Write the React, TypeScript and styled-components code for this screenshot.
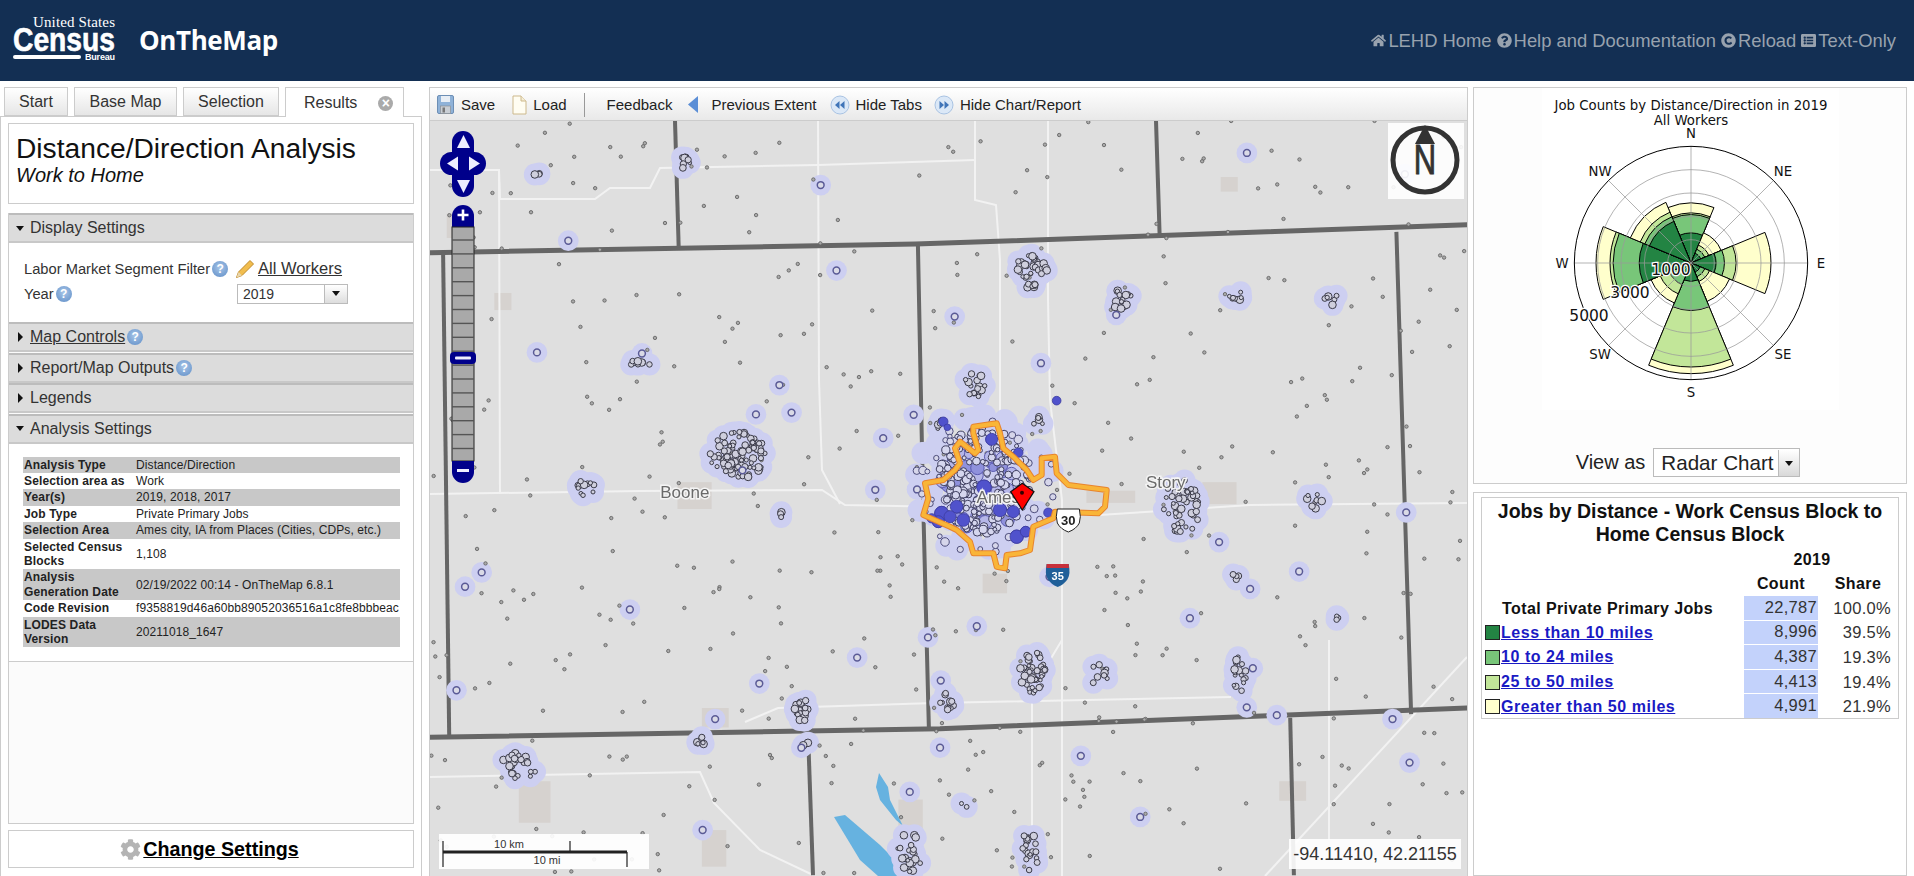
import React from "react";
import styled, { createGlobalStyle } from "styled-components";
import { FaHome, FaQuestionCircle, FaCopyright, FaListAlt, FaCog } from "react-icons/fa";

const Global = createGlobalStyle`
  html, body { margin: 0; padding: 0; background: #fff; overflow: hidden; }
  body { font-family: "Liberation Sans", Arial, sans-serif; color: #222; }
  * { box-sizing: border-box; }
`;

const Page = styled.div`width: 1914px; height: 876px; display: flex; flex-direction: column; overflow: hidden;`;
const Header = styled.header`height: 81px; background: #132f53; display: flex; align-items: center; padding: 0 18px 0 12px;`;
const AppName = styled.div`font: 700 26px "Open Sans", sans-serif; color: #fff; margin-left: 17px; letter-spacing: -0.4px; margin-top: -2px;`;
const HeaderLinks = styled.nav`margin-left: auto; display: flex; gap: 5px; color: #98a2ae; font-size: 18.4px;`;
const HeaderLink = styled.a`display: flex; align-items: center; gap: 2px; svg { width: 15px; height: 15px; }`;

const Main = styled.main`flex: 1; display: flex; padding-top: 6px; min-height: 0;`;
const Left = styled.section`width: 422px; display: flex; flex-direction: column;`;
const Tabs = styled.div`height: 29px; display: flex; gap: 6px; padding-left: 4px; position: relative; z-index: 1;`;
const Tab = styled.div<{ $w: number; $active?: boolean }>`
  width: ${p => p.$w}px; height: ${p => (p.$active ? 30 : 29)}px; border: 1px solid #ccc; border-bottom: ${p => (p.$active ? "none" : "1px solid #ccc")};
  background: ${p => (p.$active ? "#fff" : "linear-gradient(#fff, #e6e6e6)")};
  font-size: 16px; color: #333; display: flex; align-items: center; justify-content: ${p => (p.$active ? "flex-start" : "center")};
  padding-left: ${p => (p.$active ? 18 : 0)}px;
`;
const CloseDot = styled.span`
  width: 15px; height: 15px; border-radius: 50%; background: #aaa; color: #fff; font-size: 14px; font-weight: 700; line-height: 15px; text-align: center; margin-left: 21px; margin-top: 2px;
`;
const LeftBody = styled.div`flex: 1; border: 1px solid #ccc; border-bottom: none; padding: 6px 7px 8px; display: flex; flex-direction: column; min-height: 0;`;
const TitleBox = styled.div`height: 81px; border: 1px solid #ccc; padding: 8px 7px;`;
const Title = styled.h1`margin: 0; font-size: 28.2px; font-weight: 400; color: #111; line-height: 32px; white-space: nowrap;`;
const Subtitle = styled.div`font-size: 20px; font-style: italic; color: #111; line-height: 23px;`;
const Accordion = styled.div`margin-top: 9px; flex: 1; border: 1px solid #ccc; border-top: none; background: #fbfbfb;`;
const SectionHead = styled.div`
  height: 30px; background: #dcdcdc; border-top: 2px solid #bcbcbc; border-bottom: 2px solid #c8c8c8; display: flex; align-items: center; font-size: 16px; color: #333; padding-left: 7px; margin-bottom: 0.5px;
`;
const Caret = styled.span<{ $open?: boolean }>`
  width: 0; height: 0; margin-right: 6px;
  ${p => p.$open
    ? "border-left: 4.5px solid transparent; border-right: 4.5px solid transparent; border-top: 5px solid #111; margin-left: 0;"
    : "border-top: 5px solid transparent; border-bottom: 5px solid transparent; border-left: 5px solid #111; margin-left: 2px; margin-right: 7px;"}
`;
const Underlined = styled.span`text-decoration: underline;`;
const Help = styled.span`
  display: inline-flex; align-items: center; justify-content: center; width: 16px; height: 16px; border-radius: 50%; margin-left: 2px;
  background: radial-gradient(circle at 50% 40%, #a9c6e8, #5d8cc6); color: #fff; font-size: 12px; font-weight: 700; flex: none;
`;
const SettingsBody = styled.div`height: 79px; background: #fff; margin-top: -0.5px; padding: 13px 15px 0; display: grid; grid-template-columns: 211px 1fr; grid-auto-rows: 25px; align-items: center; font-size: 14.7px; color: #333;`;
const LabelCell = styled.div`display: flex; align-items: center; white-space: nowrap;`;
const ValueCell = styled.div`display: flex; align-items: center; gap: 3px; font-size: 16.5px;`;
const SelectBox = styled.div`width: 111px; height: 20px; border: 1px solid #bbb; display: flex; align-items: center; font-size: 14px; padding-left: 5px; margin-left: 2px;`;
const SelectArrow = styled.span`
  margin-left: auto; width: 23px; height: 100%; border-left: 1px solid #bbb; background: linear-gradient(#fff, #ddd); display: flex; align-items: center; justify-content: center;
  &::after { content: ""; border-left: 4.5px solid transparent; border-right: 4.5px solid transparent; border-top: 5px solid #111; }
`;
const AnalysisBody = styled.div`height: 218px; background: #fff; border-bottom: 1px solid #ccc; margin-top: -0.5px; padding: 13px 14px 0;`;
const InfoTable = styled.table`width: 377px; border-collapse: collapse; font-size: 12px; line-height: 14.4px; color: #222; table-layout: fixed;`;
const InfoRow = styled.tr<{ $dark?: boolean }>`background: ${p => (p.$dark ? "#c8c8c8" : "#fff")};`;
const InfoKey = styled.th`width: 113px; text-align: left; padding: 1px 1px; font-weight: 700; vertical-align: middle; letter-spacing: 0.15px;`;
const InfoVal = styled.td`padding: 1px 0 1px 0; vertical-align: middle; white-space: nowrap; letter-spacing: 0.1px;`;
const ChangeBox = styled.div`height: 38px; margin-top: 6px; border: 1px solid #ccc; display: flex; align-items: center; justify-content: center; font-size: 19.7px; font-weight: 700; color: #000; gap: 2px; flex: none; padding-top: 1px;
  svg { width: 21px; height: 21px; color: #b4b4b4; margin-left: -3px; }`;

const Center = styled.section`width: 1039px; margin-left: 7px; display: flex; flex-direction: column; border-left: 1px solid #ccc; border-right: 1px solid #ccc;`;
const Toolbar = styled.div`height: 34px; flex: none; border-top: 1px solid #ccc; border-bottom: 1px solid #ccc; background: linear-gradient(#fff, #e9e9e9); display: flex; align-items: center; font-size: 15px; color: #222; padding: 1px 0 0 7px;`;
const ToolItem = styled.span<{ $ml: number }>`display: flex; align-items: center; gap: 6px; margin-left: ${p => p.$ml}px; white-space: nowrap;`;
const ToolSep = styled.span`width: 1px; height: 24px; background: #999; margin-left: 17px;`;
const MapWrap = styled.div`flex: 1; position: relative; overflow: hidden; background: #dfdfdf;`;
const MapSvg = styled.svg`display: block; width: 1037px; height: 755px; filter: blur(0.35px);`;
const PanZoom = styled.svg`position: absolute; left: 10px; top: 9px;`;
const North = styled.svg`position: absolute; left: 958px; top: 2px; background: rgba(255,255,255,0.9);`;
const Scale = styled.svg`position: absolute; left: 9px; top: 713px; background: rgba(255,255,255,0.92);`;
const Coords = styled.div`position: absolute; left: 859px; top: 718px; width: 172px; height: 30px; background: rgba(255,255,255,0.9); font-size: 18px; color: #333; display: flex; align-items: center; justify-content: center; white-space: nowrap;`;

const Right = styled.section`width: 434px; margin-left: 5px; display: flex; flex-direction: column;`;
const ChartBox = styled.div`height: 397px; border: 1px solid #ccc; background: #fdfdfd; display: flex; flex-direction: column; align-items: center; flex: none;`;
const ChartSvg = styled.svg`display: block; background: #fff; flex: none;`;
const ViewRow = styled.div`display: flex; align-items: center; gap: 8px; margin-top: 38px; margin-left: -4px; font-size: 20px; color: #222;`;
const ViewSelect = styled.div`width: 147px; height: 29px; border: 1px solid #bbb; background: #fff; display: flex; align-items: center; padding: 1px 0 0 7px; font-size: 20.6px; white-space: nowrap;`;
const ViewArrow = styled.span`
  margin-left: auto; width: 21px; height: 100%; border-left: 1px solid #bbb; background: linear-gradient(#fff, #d8d8d8); display: flex; align-items: center; justify-content: center; flex: none;
  &::after { content: ""; border-left: 4.5px solid transparent; border-right: 4.5px solid transparent; border-top: 5px solid #111; }
`;
const ReportBox = styled.div`flex: 1; margin-top: 8px; border: 1px solid #ccc; padding: 4px 7px;`;
const ReportInner = styled.div`border: 1px solid #ccc; height: 222px; overflow: hidden;`;
const ReportTitle = styled.div`font-size: 19.5px; font-weight: 700; color: #111; text-align: center; line-height: 23px; padding-top: 2px; white-space: nowrap;`;
const ReportTable = styled.table`width: 416px; margin-top: 2px; border-collapse: separate; border-spacing: 0; table-layout: fixed; font-size: 16.5px; color: #333;`;
const Th = styled.th<{ $align?: string }>`height: 24px; padding: 0; font-weight: 700; color: #111; text-align: ${p => p.$align || "center"}; font-size: 16px; letter-spacing: 0.4px;`;
const RowHead = styled.td`height: 24.6px; padding: 0 0 0 3px; white-space: nowrap;`;
const RowLabel = styled.div`display: flex; align-items: center; gap: 2px;`;
const Swatch = styled.span<{ $c: string }>`width: 15px; height: 15px; background: ${p => p.$c}; border: 1px solid #222; flex: none;`;
const LegendLink = styled.a`font-weight: 700; color: #1a1ac4; text-decoration: underline; font-size: 16px; letter-spacing: 0.55px; margin-left: -1px;`;
const TotalLabel = styled.span`font-weight: 700; color: #111; font-size: 16px; letter-spacing: 0.4px; margin-left: 17px;`;
const Count = styled.td`height: 24.6px; padding: 0 1px 1px 0; text-align: right; background: #c3d2fb; border-bottom: 1px solid #fff; letter-spacing: 0.3px;`;
const Share = styled.td`height: 24.6px; padding: 0 7px 0 0; text-align: right; letter-spacing: 0.3px;`;
const LogoSvg = styled.svg`flex: none; overflow: visible;`;

/* ---------- map data (coordinates: full-page pixels, shifted by OX/OY) ---------- */
const K = 1914 / 1568;
const OX = 430, OY = 121;
const sx = (x: number) => x * K - OX;
const sy = (y: number) => y * K - OY;
const pts = (a: number[][]) => a.map(([x, y]) => `${sx(x).toFixed(1)},${sy(y).toFixed(1)}`).join(" ");
const fpts = (a: number[][]) => a.map(([x, y]) => `${x - OX},${y - OY}`).join(" ");

function rng(seed: number) {
  return () => {
    seed |= 0; seed = (seed + 0x6d2b79f5) | 0;
    let t = Math.imul(seed ^ (seed >>> 15), 1 | seed);
    t = (t + Math.imul(t ^ (t >>> 7), 61 | t)) ^ t;
    return ((t ^ (t >>> 14)) >>> 0) / 4294967296;
  };
}
const R = rng(42);

const county = [
  [[352, 207], [750, 200], [1203, 184]],
  [[553, 99], [556, 203]],
  [[947, 99], [950, 192]],
  [[363, 207], [368, 603]],
  [[752, 200], [756, 400], [761, 597]],
  [[1144, 190], [1156, 585]],
  [[352, 604], [770, 597], [1203, 580]],
  [[662, 602], [666, 717]],
  [[1057, 588], [1060, 717]],
];
const roads = [
  [[430, 170], [499, 170], [500, 199], [595, 199], [610, 188], [650, 188], [660, 168], [818, 165], [975, 160]],
  [[499, 170], [500, 494]],
  [[818, 121], [819, 380], [822, 470], [840, 504]],
  [[975, 121], [975, 200], [996, 205], [1000, 260], [1000, 480]],
  [[1048, 121], [1048, 300], [1050, 400], [1062, 500], [1062, 640], [1032, 690], [1032, 876]],
  [[430, 494], [640, 491], [822, 490], [845, 505], [1000, 508], [1100, 515], [1250, 505], [1468, 503]],
  [[430, 777], [700, 772], [714, 803], [760, 850], [815, 876]],
  [[745, 722], [778, 708], [934, 703], [1231, 697]],
  [[1467, 657], [1265, 876]],
  [[1062, 640], [1062, 876]],
  [[1329, 640], [1329, 840]],
];
const towns = [[575, 580, 22, 16], [405, 240, 14, 14], [1000, 145, 14, 12], [555, 395, 28, 22], [985, 395, 28, 18], [890, 402, 40, 10], [425, 640, 26, 34], [575, 680, 20, 30], [736, 655, 20, 30], [1048, 640, 22, 16], [805, 470, 20, 16], [366, 175, 12, 20]];

type C = { x: number; y: number; r: number; f: string; s: string; w: number };
const halos: { x: number; y: number; r: number }[] = [];
const circles: C[] = [];
const dots: { x: number; y: number }[] = [];

for (let i = 0; i < 470; i++) dots.push({ x: 352 + R() * 851, y: 99 + R() * 618 });

const clusters = [
  [845, 222, 14, 14, 42], [918, 245, 9, 8, 14], [1013, 242, 6, 6, 8], [1090, 245, 6, 6, 6],
  [604, 372, 23, 21, 95], [480, 400, 7, 8, 14], [524, 298, 13, 3, 8], [660, 582, 11, 9, 18],
  [775, 577, 6, 10, 12], [845, 550, 11, 18, 46], [900, 552, 8, 10, 10], [1015, 552, 6, 15, 18],
  [1077, 410, 7, 7, 8], [968, 415, 15, 23, 52], [799, 317, 10, 12, 16], [772, 348, 7, 7, 6],
  [852, 345, 6, 6, 5], [425, 628, 15, 12, 24], [574, 607, 4, 7, 6], [745, 698, 11, 16, 22],
  [843, 698, 9, 15, 20], [440, 143, 3, 3, 3], [562, 133, 5, 7, 7], [1012, 472, 4, 4, 4],
  [1095, 505, 4, 4, 3], [640, 420, 4, 4, 3], [660, 610, 3, 3, 2], [790, 660, 3, 3, 2],
];
for (const [x, y, rx, ry, n] of clusters) {
  for (let i = 0; i < n; i++) {
    const a = R() * Math.PI * 2, d = Math.sqrt(R());
    const b = R() > 0.78;
    const cx = x + Math.cos(a) * d * rx, cy = y + Math.sin(a) * d * ry;
    halos.push({ x: cx, y: cy, r: 9 });
    circles.push({ x: cx, y: cy, r: b ? 3.8 : 1.8 + R() * 1.6, f: "#cfcfdd", s: "#3a3a48", w: 1 });
  }
}
for (let i = 0; i < 46; i++) {
  const x = 370 + R() * 820, y = 110 + R() * 590;
  halos.push({ x, y, r: 8.5 });
  circles.push({ x, y, r: 3.4, f: "#dadae6", s: "#5a5a96", w: 1.5 });
}
// Ames centre: a dense mass of circles with scattered halos around it
for (let i = 0; i < 120; i++) {
  const a = R() * Math.PI * 2, d = Math.sqrt(R());
  halos.push({ x: 806 + Math.cos(a) * d * 58, y: 398 + Math.sin(a) * d * 58, r: 9 });
}
for (let i = 0; i < 50; i++) {
  const a = R() * Math.PI * 2, d = 0.55 + R() * 0.45;
  circles.push({ x: 806 + Math.cos(a) * d * 60, y: 398 + Math.sin(a) * d * 56, r: 2 + R() * 2.4, f: "#d6d6ea", s: "#4e4e7c", w: 1 });
}
for (let i = 0; i < 45; i++) {
  const a = R() * Math.PI * 2, d = Math.sqrt(R());
  circles.push({ x: 806 + Math.cos(a) * d * 36, y: 400 + Math.sin(a) * d * 38, r: 4 + R() * 3, f: i % 2 ? "#8f91dc" : "#b5b6e8", s: "#5a5ab0", w: 1 });
}
for (let i = 0; i < 230; i++) {
  const a = R() * Math.PI * 2, d = Math.sqrt(R());
  circles.push({ x: 806 + Math.cos(a) * d * 38, y: 393 + Math.sin(a) * d * 44, r: 1.8 + R() * 2.6, f: "#d5d6ee", s: "#3f3f60", w: 1 });
}
const big: number[][] = [[245, 370, 21], [310, 390, 19], [235, 395, 18], [290, 350, 19], [460, 365, 18], [470, 440, 20], [497, 425, 16], [395, 148, 18], [372, 292, 22], [420, 360, 20], [250, 95, 14], [475, 188, 14], [590, 32, 13], [262, 112, 10], [565, 368, 14], [270, 380, 18], [215, 385, 14]];
const ames = [[340, 110], [410, 100], [420, 130], [430, 175], [460, 200], [500, 240], [520, 270], [545, 255], [545, 205], [585, 200], [590, 250], [625, 285], [740, 300], [735, 350], [715, 370], [585, 365], [580, 385], [520, 410], [510, 480], [480, 490], [440, 495], [435, 535], [410, 530], [400, 490], [340, 490], [330, 455], [290, 420], [270, 410], [190, 375], [205, 325], [195, 280], [250, 270], [285, 240], [300, 220], [285, 175], [300, 155], [345, 190], [355, 180], [340, 130]];
const zx = (x: number) => 860 + x / 3 - OX;
const zy = (y: number) => 390 + y / 3 - OY;
const amesPts = ames.map(([x, y]) => `${zx(x).toFixed(1)},${zy(y).toFixed(1)}`).join(" ");

const CityLabel: React.FC<{ x: number; y: number; children: string }> = ({ x, y, children }) => (
  <text x={x} y={y} fontFamily="Liberation Sans" fontSize="17" fill="#6a6a6a" stroke="#f4f4f4" strokeWidth="3" paintOrder="stroke" textAnchor="middle">{children}</text>
);

const MapDrawing = () => (
  <MapSvg viewBox="0 0 1037 755">
    <rect width="1037" height="755" fill="#dfdfdf" />
    {towns.map(([x, y, w, h], i) => <rect key={i} x={sx(x)} y={sy(y)} width={w * K} height={h * K} fill="#d6d2cf" />)}
    <polygon points={fpts([[834, 817], [845, 815], [880, 845], [903, 868], [903, 876], [878, 876], [860, 860]])} fill="#66b2e0" />
    <polygon points={fpts([[879, 773], [888, 787], [890, 800], [903, 826], [896, 820], [880, 800], [876, 787]])} fill="#66b2e0" />
    {roads.map((r, i) => <polyline key={i} points={fpts(r)} fill="none" stroke="#f2f2f2" strokeWidth="2" />)}
    {county.map((r, i) => <polyline key={i} points={pts(r)} fill="none" stroke="#666" strokeWidth={i === 0 || i === 6 ? 5 : 4} />)}
    <g fill="#cdcff1">
      {halos.map((h, i) => <circle key={i} cx={sx(h.x)} cy={sy(h.y)} r={h.r * K} />)}
    </g>
    {dots.map((d, i) => <circle key={i} cx={sx(d.x)} cy={sy(d.y)} r="1.7" fill="#aaa" stroke="#666" strokeWidth=".9" />)}
    {big.slice(0, 10).map(([x, y, r], i) => <circle key={i} cx={zx(x)} cy={zy(y)} r={r / 3} fill="#4a4cc8" stroke="#3c3ca0" strokeWidth=".8" />)}
    {circles.map((c, i) => <circle key={i} cx={sx(c.x)} cy={sy(c.y)} r={c.r} fill={c.f} stroke={c.s} strokeWidth={c.w} />)}
    {big.map(([x, y, r], i) => <circle key={i} cx={zx(x)} cy={zy(y)} r={r / 3} fill="#5052cc" stroke="#3c3ca0" strokeWidth=".8" />)}
    <polygon points={amesPts} fill="none" stroke="#e8842e" strokeWidth="6" strokeLinejoin="round" />
    <polygon points={amesPts} fill="none" stroke="#f9b538" strokeWidth="4" strokeLinejoin="round" />
    <CityLabel x={sx(561)} y={sy(408)}>Boone</CityLabel>
    <CityLabel x={sx(955)} y={sy(400)}>Story</CityLabel>
    <CityLabel x={zx(415)} y={zy(338)}>Ames</CityLabel>
    <polygon points={`${zx(452)},${zy(305)} ${zx(487)},${zy(280)} ${zx(522)},${zy(305)} ${zx(487)},${zy(360)}`} fill="#f00" stroke="#111" strokeWidth="1.2" />
    <circle cx={zx(486)} cy={zy(308)} r="2" fill="#300" />
    <g transform={`translate(${zx(625)},${zy(390)})`}>
      <path d="M-11,-11 h22 q2,8 0,14 q-3,6 -11,9 q-8,-3 -11,-9 q-2,-6 0,-14z" fill="#fff" stroke="#222" strokeWidth="1" />
      <text y="5" textAnchor="middle" fontFamily="Liberation Sans" fontWeight="700" fontSize="13" fill="#222">30</text>
    </g>
    <g transform={`translate(${zx(593)},${zy(552)})`}>
      <path d="M-11,-10 h22 q2,10 -1,15 q-3,5 -10,8 q-7,-3 -10,-8 q-3,-5 -1,-15z" fill="#1f5f99" />
      <path d="M-11,-10 h22 l.3,4 h-22.6z" fill="#c8303a" />
      <text y="6" textAnchor="middle" fontFamily="Liberation Sans" fontWeight="700" fontSize="11" fill="#fff">35</text>
    </g>
  </MapSvg>
);

const PanZoomControl = () => {
  const N = "#00008b";
  const cells = Array.from({ length: 16 }, (_, i) => 110 + i * 13.9);
  return (
    <PanZoom width="48" height="355" viewBox="0 0 48 355">
      <rect x="12" y="1" width="22" height="66" rx="11" fill={N} />
      <rect y="22" x="0" width="46" height="23" rx="11.5" fill={N} />
      <circle cx="23" cy="33.5" r="11" fill={N} />
      <polygon points="23.5,5 30,18 17,18" fill="#eef" />
      <polygon points="23.5,63 30,50 17,50" fill="#eef" />
      <polygon points="7,33.5 18,26.5 18,40.5" fill="#eef" />
      <polygon points="40,33.5 29,26.5 29,40.5" fill="#eef" />
      <path d="M12,97 V86 a11,11 0 0 1 22,0 V97 z" fill={N} />
      <path d="M17.5,85 h11 M23,79.5 v11" stroke="#fff" strokeWidth="2.6" />
      <rect x="12" y="97" width="22" height="234" fill="#a9a9a9" stroke="#222" strokeWidth="1" />
      {cells.map(y => <line key={y} x1="12" x2="34" y1={y} y2={y} stroke="#555" strokeWidth="1.4" />)}
      <rect x="10" y="222" width="26" height="12" rx="4" fill={N} />
      <rect x="15" y="226.5" width="16" height="3" rx="1" fill="#eef" />
      <path d="M12,331 V342 a11,11 0 0 0 22,0 V331 z" fill={N} />
      <rect x="17" y="339" width="12" height="3" fill="#eef" />
    </PanZoom>
  );
};

/* ---------- radar ---------- */
const wedge = (cx: number, cy: number, a: number, r1: number) => {
  const h = 22.5 * Math.PI / 180, t = a * Math.PI / 180;
  const p = (x: number) => `${(cx + r1 * Math.sin(x)).toFixed(2)},${(cy - r1 * Math.cos(x)).toFixed(2)}`;
  return `M${cx},${cy} L${p(t - h)} A${r1},${r1} 0 0 1 ${p(t + h)} Z`;
};
const radii: [number, number[]][] = [
  [0, [90, 145, 150, 180]], [45, [32, 45, 58, 98]], [90, [75, 100, 135, 240]], [135, [30, 45, 60, 125]],
  [180, [55, 142, 312, 332]], [225, [35, 70, 100, 130]], [270, [155, 233, 243, 285]], [315, [135, 150, 165, 197]],
];
const fills = ["#238443", "#78c679", "#c2e699", "#ffffcc"];
const Radar = () => {
  const cx = 223, cy = 175;
  const L = (x: number, y: number, t: string) => <text x={x} y={y} textAnchor="middle" fontFamily="DejaVu Sans" fontSize="13.3" fill="#111">{t}</text>;
  const V = (x: number, y: number, t: string) => <text x={x} y={y} textAnchor="middle" fontFamily="DejaVu Sans" fontSize="15.5" fill="#111" stroke="#fff" strokeWidth="2.5" paintOrder="stroke">{t}</text>;
  return (
    <ChartSvg width="297" height="322" viewBox="74 0 297 322">
      {L(223, 22, "Job Counts by Distance/Direction in 2019")}
      {L(223, 37, "All Workers")}
      {radii.map(([a, rs]) => [...rs].reverse().map((r, i) => (
        <path key={a + "-" + i} d={wedge(cx, cy, a, r / 3)} fill={fills[3 - i]} stroke="#000" strokeWidth="1" />
      )))}
      {[1, 2, 3, 4].map(i => <circle key={i} cx={cx} cy={cy} r={i * 70 / 3} fill="none" stroke="#999" strokeWidth="1" opacity=".75" />)}
      {[0, 45, 90, 135].map(a => {
        const t = a * Math.PI / 180, r = 350 / 3;
        return <line key={a} x1={cx - r * Math.sin(t)} y1={cy + r * Math.cos(t)} x2={cx + r * Math.sin(t)} y2={cy - r * Math.cos(t)} stroke="#999" strokeWidth="1" opacity=".75" />;
      })}
      <circle cx={cx} cy={cy} r={350 / 3} fill="none" stroke="#000" strokeWidth="1" />
      {L(223, 50, "N")}{L(223, 309, "S")}{L(94, 180, "W")}{L(353, 180, "E")}
      {L(132, 88, "NW")}{L(315, 88, "NE")}{L(132, 271, "SW")}{L(315, 271, "SE")}
      {V(203, 187, "1000")}{V(162, 210, "3000")}{V(121, 233, "5000")}
    </ChartSvg>
  );
};

/* ---------- small icons ---------- */
const SaveIcon = () => (
  <svg width="17" height="19" viewBox="0 0 17 19"><rect x=".5" y=".5" width="16" height="18" rx="1.5" fill="#8fb2d8" stroke="#6d8fb5" /><rect x="4" y="1" width="9" height="6" fill="#e8eef5" /><rect x="3.5" y="11" width="10" height="7.5" fill="#c9ced4" stroke="#888" strokeWidth=".6" /><rect x="5.5" y="12.5" width="2.5" height="5" fill="#777" /></svg>
);
const LoadIcon = () => (
  <svg width="15" height="20" viewBox="0 0 15 20"><path d="M1,1 H9 L14,6 V19 H1 Z" fill="#fffdf2" stroke="#cdb98c" /><path d="M9,1 V6 H14" fill="#f5eed7" stroke="#cdb98c" /></svg>
);
const BackIcon = () => (
  <svg width="11" height="17" viewBox="0 0 11 17"><polygon points="10,0 10,17 0,8.5" fill="#5b8ed6" /></svg>
);
const DoubleIcon: React.FC<{ flip?: boolean }> = ({ flip }) => (
  <svg width="20" height="20" viewBox="0 0 20 20">
    <circle cx="10" cy="10" r="9" fill="#dbe8f7" stroke="#a9c3e3" />
    <g fill="#3f74b8" transform={flip ? "rotate(180 10 10)" : undefined}><polygon points="9.5,6 9.5,14 5,10" /><polygon points="14.5,6 14.5,14 10,10" /></g>
  </svg>
);
const Pencil = () => (
  <svg width="20" height="20" viewBox="0 0 20 20">
    <path d="M15,1.5 L18.5,5 L7,16.5 L1.5,18.5 L3.5,13 Z" fill="#f1bd4e" stroke="#c08a2a" strokeWidth="1" />
    <path d="M3.5,13 L7,16.5 L1.5,18.5 Z" fill="#e8d6ae" />
  </svg>
);
const Logo = () => (
  <LogoSvg width="110" height="62" viewBox="0 0 110 62">
    <text x="21" y="17" fontFamily="Liberation Serif" fontSize="15" fill="#fff" textLength="82">United States</text>
    <text x="1" y="41" fontFamily="Liberation Sans" fontWeight="700" fontSize="33" fill="#fff" stroke="#fff" strokeWidth=".6" textLength="102" lengthAdjust="spacingAndGlyphs">Census</text>
    <rect x="1" y="45" width="68" height="4" rx="2" fill="#fff" />
    <text x="73" y="50" fontFamily="Liberation Sans" fontWeight="700" fontSize="9" fill="#fff" textLength="30">Bureau</text>
  </LogoSvg>
);

const infoRows: [string, string][] = [
  ["Analysis Type", "Distance/Direction"],
  ["Selection area as", "Work"],
  ["Year(s)", "2019, 2018, 2017"],
  ["Job Type", "Private Primary Jobs"],
  ["Selection Area", "Ames city, IA from Places (Cities, CDPs, etc.)"],
  ["Selected Census Blocks", "1,108"],
  ["Analysis Generation Date", "02/19/2022 00:14 - OnTheMap 6.8.1"],
  ["Code Revision", "f9358819d46a60bb89052036516a1c8fe8bbbeac"],
  ["LODES Data Version", "20211018_1647"],
];
const legendRows: [string, string, string, string][] = [
  ["#238443", "Less than 10 miles", "8,996", "39.5%"],
  ["#78c679", "10 to 24 miles", "4,387", "19.3%"],
  ["#c2e699", "25 to 50 miles", "4,413", "19.4%"],
  ["#ffffcc", "Greater than 50 miles", "4,991", "21.9%"],
];

export default function App() {
  return (
    <Page>
      <Global />
      <Header>
        <Logo />
        <AppName>OnTheMap</AppName>
        <HeaderLinks>
          <HeaderLink><FaHome />LEHD Home</HeaderLink>
          <HeaderLink><FaQuestionCircle />Help and Documentation</HeaderLink>
          <HeaderLink><FaCopyright />Reload</HeaderLink>
          <HeaderLink><FaListAlt />Text-Only</HeaderLink>
        </HeaderLinks>
      </Header>
      <Main>
        <Left>
          <Tabs>
            <Tab $w={64}>Start</Tab>
            <Tab $w={103}>Base Map</Tab>
            <Tab $w={96}>Selection</Tab>
            <Tab $w={119} $active>Results<CloseDot>×</CloseDot></Tab>
          </Tabs>
          <LeftBody>
            <TitleBox>
              <Title>Distance/Direction Analysis</Title>
              <Subtitle>Work to Home</Subtitle>
            </TitleBox>
            <Accordion>
              <SectionHead><Caret $open />Display Settings</SectionHead>
              <SettingsBody>
                <LabelCell>Labor Market Segment Filter<Help>?</Help></LabelCell>
                <ValueCell><Pencil /><Underlined>All Workers</Underlined></ValueCell>
                <LabelCell>Year<Help>?</Help></LabelCell>
                <SelectBox>2019<SelectArrow /></SelectBox>
              </SettingsBody>
              <SectionHead><Caret /><Underlined>Map Controls</Underlined><Help>?</Help></SectionHead>
              <SectionHead><Caret />Report/Map Outputs<Help>?</Help></SectionHead>
              <SectionHead><Caret />Legends</SectionHead>
              <SectionHead><Caret $open />Analysis Settings</SectionHead>
              <AnalysisBody>
                <InfoTable>
                  <tbody>
                    {infoRows.map(([k, v], i) => (
                      <InfoRow key={k} $dark={i % 2 === 0}><InfoKey>{k}</InfoKey><InfoVal>{v}</InfoVal></InfoRow>
                    ))}
                  </tbody>
                </InfoTable>
              </AnalysisBody>
            </Accordion>
            <ChangeBox><FaCog /><Underlined>Change Settings</Underlined></ChangeBox>
          </LeftBody>
        </Left>
        <Center>
          <Toolbar>
            <ToolItem $ml={0}><span style={{ display: "flex", marginRight: 1 }}><SaveIcon /></span>Save</ToolItem>
            <ToolItem $ml={17}><LoadIcon />Load</ToolItem>
            <ToolSep />
            <ToolItem $ml={22}>Feedback</ToolItem>
            <ToolItem $ml={16}><BackIcon /><span style={{ marginLeft: 6 }}>Previous Extent</span></ToolItem>
            <ToolItem $ml={13}><DoubleIcon />Hide Tabs</ToolItem>
            <ToolItem $ml={12}><DoubleIcon flip />Hide Chart/Report</ToolItem>
          </Toolbar>
          <MapWrap>
            <MapDrawing />
            <PanZoomControl />
            <North width="76" height="76" viewBox="0 0 76 76">
              <circle cx="37" cy="37" r="32" fill="none" stroke="#333" strokeWidth="5" />
              <polygon points="37,2 47,21 27,21" fill="#333" />
              <text x="0" y="0" transform="translate(37 51) scale(.72 1)" textAnchor="middle" fontFamily="Liberation Sans" fontSize="43" fill="#333" stroke="#333" strokeWidth="1">N</text>
            </North>
            <Scale width="210" height="35" viewBox="0 0 210 35">
              <path d="M4,7 V33 M4,18 H188 M131,7 V18 M188,18 V33" fill="none" stroke="#222" strokeWidth="1.2" />
              <path d="M4,18 H188" stroke="#222" strokeWidth="3" />
              <text x="70" y="14" textAnchor="middle" fontFamily="Liberation Sans" fontSize="11" fill="#333">10 km</text>
              <text x="108" y="30" textAnchor="middle" fontFamily="Liberation Sans" fontSize="11" fill="#333">10 mi</text>
            </Scale>
            <Coords>-94.11410, 42.21155</Coords>
          </MapWrap>
        </Center>
        <Right>
          <ChartBox>
            <Radar />
            <ViewRow>View as<ViewSelect>Radar Chart<ViewArrow /></ViewSelect></ViewRow>
          </ChartBox>
          <ReportBox>
            <ReportInner>
              <ReportTitle>Jobs by Distance - Work Census Block to<br />Home Census Block</ReportTitle>
              <ReportTable>
                <colgroup><col style={{ width: 262 }} /><col style={{ width: 74 }} /><col style={{ width: 80 }} /></colgroup>
                <thead>
                  <tr><Th /><Th colSpan={2} style={{ paddingRight: 18 }}>2019</Th></tr>
                  <tr><Th /><Th>Count</Th><Th>Share</Th></tr>
                </thead>
                <tbody>
                  <tr>
                    <RowHead><TotalLabel>Total Private Primary Jobs</TotalLabel></RowHead>
                    <Count>22,787</Count><Share>100.0%</Share>
                  </tr>
                  {legendRows.map(([c, l, n, s]) => (
                    <tr key={l}>
                      <RowHead><RowLabel><Swatch $c={c} /><LegendLink>{l}</LegendLink></RowLabel></RowHead>
                      <Count>{n}</Count><Share>{s}</Share>
                    </tr>
                  ))}
                </tbody>
              </ReportTable>
            </ReportInner>
          </ReportBox>
        </Right>
      </Main>
    </Page>
  );
}
